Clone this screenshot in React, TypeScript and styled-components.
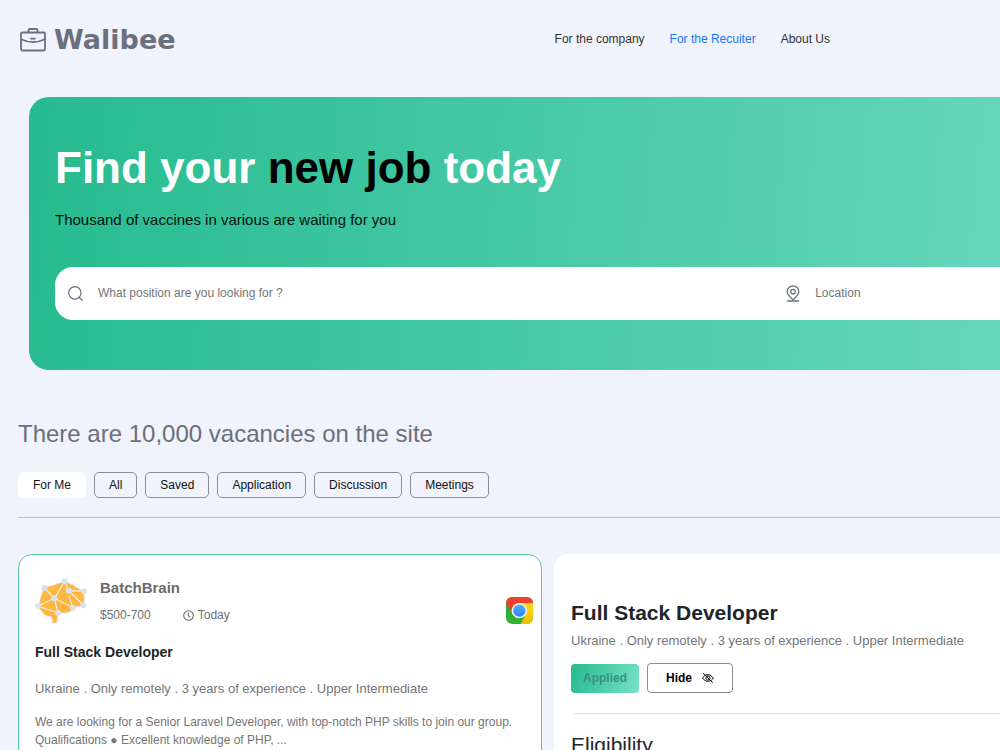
import React from "react";
import styled, { createGlobalStyle } from "styled-components";

const GlobalStyle = createGlobalStyle`
  *, *::before, *::after { box-sizing: border-box; }
  html { scrollbar-width: none; }
  body {
    margin: 0;
    background: #f0f2fc;
    color: #212529;
    font-family: "Liberation Sans", Arial, sans-serif;
    font-size: 12px;
    line-height: 18px;
    overflow-x: hidden;
  }
  h1, h2, h3, p { margin: 0; }
  button, input { font: inherit; }
`;

const Header = styled.header`
  display: flex;
  align-items: center;
  justify-content: space-between;
  height: 80px;
  padding: 0 17% 0 20px;
`;

const Brand = styled.a`
  display: flex;
  align-items: center;
  gap: 8px;
  color: #6b7080;
  font-family: "DejaVu Sans", sans-serif;
  font-size: 27px;
  font-weight: 700;
  line-height: 32px;
  text-decoration: none;
`;

const Nav = styled.nav`
  display: flex;
  gap: 25px;
  padding-bottom: 2px;
`;

const NavLink = styled.a<{ $active?: boolean }>`
  color: ${(p) => (p.$active ? "#1677ff" : "#333333")};
  text-decoration: none;
`;

const Hero = styled.section`
  margin: 17px 0 0 29px;
  padding: 41px 0 50px 26px;
  border-radius: 20px 0 0 20px;
  background: linear-gradient(95deg, #26bb8e, #66d6bc);
`;

const HeroTitle = styled.h1`
  color: #ffffff;
  font-size: 44px;
  font-weight: 700;
  line-height: 60px;

  span { color: #000000; }
`;

const HeroText = styled.p`
  margin-top: 12px;
  color: #06120e;
  font-size: 15px;
  line-height: 20px;
`;

const SearchBar = styled.form`
  display: grid;
  grid-template-columns: 76fr 24fr;
  margin-top: 37px;
  height: 53px;
  border-radius: 18px 0 0 18px;
  background: #ffffff;
`;

const Field = styled.label`
  display: flex;
  align-items: center;
  gap: 15px;
  min-width: 0;
  padding-left: 13px;
  color: #6b7080;

  svg { flex: none; }
`;

const FieldInput = styled.input`
  flex: 1;
  min-width: 0;
  padding: 0 0 2px;
  border: 0;
  outline: 0;
  background: transparent;
  color: #212529;

  &::placeholder { color: #757575; opacity: 1; }
`;

const Main = styled.main`
  padding-left: 18px;
`;

const Heading = styled.h2`
  margin-top: 48px;
  color: #6c6f79;
  font-size: 24px;
  font-weight: 400;
  line-height: 32px;
`;

const Tabs = styled.div`
  display: flex;
  gap: 8px;
  margin-top: 22px;
  padding-bottom: 19px;
  border-bottom: 1px solid #bcbfca;
`;

const Tab = styled.button<{ $active?: boolean }>`
  height: 26px;
  padding: 0 14px;
  border: 1px solid ${(p) => (p.$active ? "#ffffff" : "#8b8e98")};
  border-radius: 5px;
  background: ${(p) => (p.$active ? "#ffffff" : "transparent")};
  color: #111111;
`;

const Columns = styled.div`
  display: grid;
  grid-template-columns: 524fr 446fr;
  align-items: start;
  gap: 12px;
  margin-top: 36px;
`;

const JobCard = styled.article`
  min-width: 0;
  padding: 23px 8px 24px 16px;
  border: 1px solid #55c9aa;
  border-radius: 14px;
  background: #ffffff;
`;

const JobHead = styled.div`
  display: flex;
  align-items: center;
  gap: 13px;
`;

const JobInfo = styled.div`
  flex: 1;
`;

const Company = styled.h3`
  color: #6b6b6b;
  font-size: 15px;
  line-height: 20px;
`;

const Facts = styled.div`
  display: flex;
  gap: 32px;
  margin-top: 8px;
  color: #6c6f72;
`;

const Posted = styled.span`
  display: flex;
  align-items: center;
  gap: 4px;
`;

const Source = styled.span`
  display: flex;
  margin-top: 18px;
`;

const JobTitle = styled.h3`
  margin-top: 18px;
  font-size: 14px;
  line-height: 20px;
`;

const Requirements = styled.p`
  color: #757575;
  font-size: 13px;
  line-height: 20px;
`;

const JobRequirements = styled(Requirements)`
  margin-top: 17px;
`;

const Description = styled.p`
  margin-top: 14px;
  color: #757575;
`;

const Detail = styled.article`
  min-width: 0;
  padding: 44px 0 40px 17px;
  border-radius: 14px 0 0 0;
  background: #ffffff;
`;

const DetailTitle = styled.h2`
  margin-bottom: 3px;
  font-size: 21px;
  line-height: 30px;
`;

const Actions = styled.div`
  display: flex;
  align-items: center;
  gap: 8px;
  margin: 12px 0 20px;
`;

const AppliedButton = styled.button`
  height: 29px;
  padding: 0 12px;
  border: 0;
  border-radius: 4px;
  background: linear-gradient(105deg, #26bb8e, #79dfc8);
  color: #399377;
  font-weight: 700;
`;

const HideButton = styled.button`
  display: flex;
  align-items: center;
  gap: 10px;
  height: 30px;
  padding: 0 18px;
  border: 1px solid #8c8c8c;
  border-radius: 4px;
  background: #ffffff;
  color: #000000;
  font-weight: 700;
`;

const Rule = styled.hr`
  margin: 0 0 0 3px;
  border: 0;
  border-top: 1px solid #dedede;
`;

const SectionTitle = styled.h3`
  margin-top: 16px;
  font-size: 21px;
  font-weight: 400;
  line-height: 30px;
`;

const BriefcaseIcon = () => (
  <svg width="26" height="24" viewBox="0 0 26 24" fill="none" stroke="currentColor" strokeWidth="1.8" aria-hidden="true">
    <rect x="1" y="4.5" width="24" height="18" rx="1.2" />
    <path d="M8.5 4.5V2.2Q8.5 1 9.7 1h6.6q1.2 0 1.2 1.2v2.3M1 11.2q12 5.6 24 0" />
    <path d="M11 10.6h4" strokeLinecap="round" />
  </svg>
);

const SearchIcon = () => (
  <svg width="15" height="15" viewBox="0 0 16 16" fill="none" stroke="currentColor" strokeWidth="1.3" strokeLinecap="round" aria-hidden="true">
    <circle cx="7.3" cy="7.3" r="6.6" />
    <path d="M12 12l3.3 3.3" />
  </svg>
);

const PinIcon = () => (
  <svg width="14" height="17" viewBox="0 0 14 17" fill="none" stroke="currentColor" strokeWidth="1.3" strokeLinecap="round" aria-hidden="true">
    <path d="M7 14.8C4.7 12.6 1.2 10.1 1.2 6.6a5.8 5.8 0 0 1 11.6 0C12.8 10.1 9.3 12.6 7 14.8Z" />
    <circle cx="7" cy="6.7" r="2.3" />
    <path d="M1.5 16h11" />
  </svg>
);

const ClockIcon = () => (
  <svg width="11" height="11" viewBox="0 0 11 11" fill="none" stroke="currentColor" strokeWidth="1.1" strokeLinecap="round" aria-hidden="true">
    <circle cx="5.5" cy="5.5" r="4.8" />
    <path d="M5.3 2.8v2.9l1.7 1.2" />
  </svg>
);

const HiddenIcon = () => (
  <svg width="12" height="10" viewBox="0 0 34 28" fill="none" stroke="currentColor" strokeWidth="2.8" strokeLinecap="round" aria-hidden="true">
    <path d="M11 4.6Q24 1 32.5 14Q30 18 27 20.2M22 22.8Q9 26 1.5 14Q4 10 7 7.6" />
    <path d="M15 8.4a6 6 0 0 1 7.6 7.4M19 19.4a6 6 0 0 1-7.6-7.4" />
    <path d="M4 1.5L30 26.5" />
  </svg>
);

const brainNodes = [
  [104, 126], [165, 107], [177, 135], [223, 137], [134, 158],
  [85, 181], [145, 202], [190, 186], [221, 178],
];

const BrainLogo = () => (
  <svg width="52" height="46" viewBox="76 97 156 138" role="img" aria-label="BatchBrain">
    <path
      d="M104 123L126 120L165 106L192 119L222 137L225 162L219 181L196 184Q186 201 168 202L145 203L142 232H126Q131 217 122 213L106 210L88 188L91 160Z"
      fill="#ffb73f"
      stroke="#e6eaf0"
      strokeWidth="3"
      strokeLinejoin="round"
    />
    <path
      d="M104 126L134 158L165 107L177 135L223 137M177 135L221 178M177 150L190 186L134 158L85 181L145 202L134 158"
      fill="none"
      stroke="#f0f2f5"
      strokeWidth="3.5"
    />
    {brainNodes.map(([x, y]) => (
      <circle key={`${x}-${y}`} cx={x} cy={y} r="9" fill="#dce2ea" />
    ))}
  </svg>
);

const ChromeLogo = () => (
  <svg width="27" height="27" viewBox="0 0 81 81" role="img" aria-label="Chrome">
    <defs>
      <clipPath id="tile"><rect width="81" height="81" rx="19" /></clipPath>
      <linearGradient id="yellow" x2="0" y2="1"><stop stopColor="#ffd91a" /><stop offset="1" stopColor="#f3bd05" /></linearGradient>
      <linearGradient id="green" x2="0" y2="1"><stop stopColor="#2f9e3c" /><stop offset="1" stopColor="#33b531" /></linearGradient>
      <linearGradient id="blue" x2="0" y2="1"><stop stopColor="#52adff" /><stop offset="1" stopColor="#2c83f5" /></linearGradient>
    </defs>
    <g clipPath="url(#tile)">
      <rect width="81" height="81" fill="url(#green)" />
      <path d="M40 18H81V81H44L60 51Z" fill="url(#yellow)" />
      <path d="M0 0H81V18H40L20 48L0 20Z" fill="#ea4330" />
    </g>
    <circle cx="40" cy="41" r="23" fill="#eef3f7" />
    <circle cx="40" cy="41" r="18.5" fill="url(#blue)" />
  </svg>
);

const tabs = ["For Me", "All", "Saved", "Application", "Discussion", "Meetings"];
const requirements = "Ukraine . Only remotely . 3 years of experience . Upper Intermediate";

export default function App() {
  return (
    <>
      <GlobalStyle />
      <Header>
        <Brand href="#">
          <BriefcaseIcon />
          Walibee
        </Brand>
        <Nav>
          <NavLink href="#company">For the company</NavLink>
          <NavLink href="#recruiter" $active>For the Recuiter</NavLink>
          <NavLink href="#about">About Us</NavLink>
        </Nav>
      </Header>
      <Hero>
        <HeroTitle>Find your <span>new job</span> today</HeroTitle>
        <HeroText>Thousand of vaccines in various are waiting for you</HeroText>
        <SearchBar>
          <Field>
            <SearchIcon />
            <FieldInput type="text" aria-label="Position" placeholder="What position are you looking for ?" />
          </Field>
          <Field>
            <PinIcon />
            <FieldInput type="text" aria-label="Location" placeholder="Location" />
          </Field>
        </SearchBar>
      </Hero>
      <Main>
        <Heading>There are 10,000 vacancies on the site</Heading>
        <Tabs>
          {tabs.map((name, i) => (
            <Tab key={name} type="button" $active={i === 0}>{name}</Tab>
          ))}
        </Tabs>
        <Columns>
          <JobCard>
            <JobHead>
              <BrainLogo />
              <JobInfo>
                <Company>BatchBrain</Company>
                <Facts>
                  <span>$500-700</span>
                  <Posted><ClockIcon />Today</Posted>
                </Facts>
              </JobInfo>
              <Source><ChromeLogo /></Source>
            </JobHead>
            <JobTitle>Full Stack Developer</JobTitle>
            <JobRequirements>{requirements}</JobRequirements>
            <Description>
              We are looking for a Senior Laravel Developer, with top-notch PHP skills to join our group.
              Qualifications ● Excellent knowledge of PHP, ...
            </Description>
          </JobCard>
          <Detail>
            <DetailTitle>Full Stack Developer</DetailTitle>
            <Requirements>{requirements}</Requirements>
            <Actions>
              <AppliedButton type="button" disabled>Applied</AppliedButton>
              <HideButton type="button">Hide <HiddenIcon /></HideButton>
            </Actions>
            <Rule />
            <SectionTitle>Eligibility</SectionTitle>
          </Detail>
        </Columns>
      </Main>
    </>
  );
}
